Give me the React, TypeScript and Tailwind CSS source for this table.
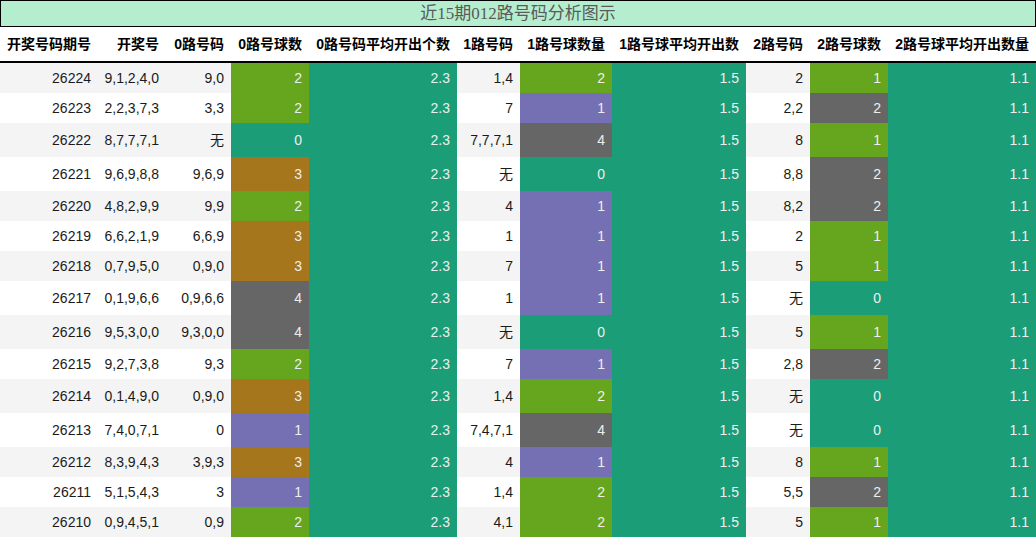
import React from 'react';

type Tone = 'green' | 'purple' | 'brown' | 'gray' | 'teal';

const toneClass: Record<Tone, string> = {
  green: 'bg-[#66a61e]',
  purple: 'bg-[#7570b3]',
  brown: 'bg-[#a6761d]',
  gray: 'bg-[#666666]',
  teal: 'bg-[#1b9e77]',
};

// [期号, 开奖号, 0路号码, 0路球数, 色, 1路号码, 1路球数, 色, 2路号码, 2路球数, 色]
type Row = [string, string, string, string, Tone, string, string, Tone, string, string, Tone];

const rows: Row[] = [
  ['26224', '9,1,2,4,0', '9,0', '2', 'green', '1,4', '2', 'green', '2', '1', 'green'],
  ['26223', '2,2,3,7,3', '3,3', '2', 'green', '7', '1', 'purple', '2,2', '2', 'gray'],
  ['26222', '8,7,7,7,1', '无', '0', 'teal', '7,7,7,1', '4', 'gray', '8', '1', 'green'],
  ['26221', '9,6,9,8,8', '9,6,9', '3', 'brown', '无', '0', 'teal', '8,8', '2', 'gray'],
  ['26220', '4,8,2,9,9', '9,9', '2', 'green', '4', '1', 'purple', '8,2', '2', 'gray'],
  ['26219', '6,6,2,1,9', '6,6,9', '3', 'brown', '1', '1', 'purple', '2', '1', 'green'],
  ['26218', '0,7,9,5,0', '0,9,0', '3', 'brown', '7', '1', 'purple', '5', '1', 'green'],
  ['26217', '0,1,9,6,6', '0,9,6,6', '4', 'gray', '1', '1', 'purple', '无', '0', 'teal'],
  ['26216', '9,5,3,0,0', '9,3,0,0', '4', 'gray', '无', '0', 'teal', '5', '1', 'green'],
  ['26215', '9,2,7,3,8', '9,3', '2', 'green', '7', '1', 'purple', '2,8', '2', 'gray'],
  ['26214', '0,1,4,9,0', '0,9,0', '3', 'brown', '1,4', '2', 'green', '无', '0', 'teal'],
  ['26213', '7,4,0,7,1', '0', '1', 'purple', '7,4,7,1', '4', 'gray', '无', '0', 'teal'],
  ['26212', '8,3,9,4,3', '3,9,3', '3', 'brown', '4', '1', 'purple', '8', '1', 'green'],
  ['26211', '5,1,5,4,3', '3', '1', 'purple', '1,4', '2', 'green', '5,5', '2', 'gray'],
  ['26210', '0,9,4,5,1', '0,9', '2', 'green', '4,1', '2', 'green', '5', '1', 'green'],
];

const headers = [
  '开奖号码期号',
  '开奖号',
  '0路号码',
  '0路号球数',
  '0路号码平均开出个数',
  '1路号码',
  '1路号球数量',
  '1路号球平均开出数',
  '2路号码',
  '2路号球数',
  '2路号球平均开出数量',
];

const widths = [
  'w-[98px]',
  'w-[68px]',
  'w-[65px]',
  'w-[78px]',
  'w-[148px]',
  'w-[63px]',
  'w-[92px]',
  'w-[134px]',
  'w-[64px]',
  'w-[78px]',
  'w-[148px]',
];

function Plain({ w, children }: { w: string; children: React.ReactNode }) {
  return <div className={`${w} shrink-0 flex items-center justify-end pr-[7px] text-[#1a1a1a]`}>{children}</div>;
}

function Filled({ w, tone, children }: { w: string; tone: Tone; children: React.ReactNode }) {
  return (
    <div className={`${w} shrink-0 flex items-center justify-end pr-[7px] text-[#eeeeee] ${toneClass[tone]}`}>
      {children}
    </div>
  );
}

export default function App() {
  return (
    <div className="w-[1036px] h-[538px] overflow-hidden bg-white text-[14px] font-['Liberation_Sans','Noto_Sans_CJK_SC',sans-serif]">
      {/* Title */}
      <div className="h-[27px] border border-black bg-[#b5eecf] flex items-center justify-center text-[17px] text-[#5a5a5a] font-['Liberation_Serif','Noto_Sans_CJK_SC',serif]">
        近15期012路号码分析图示
      </div>

      {/* Header */}
      <div className="flex h-[36px] border-b-2 border-black font-bold text-black">
        {headers.map((h, i) => (
          <div key={h} className={`${widths[i]} shrink-0 flex items-center justify-end pr-[7px] whitespace-nowrap`}>
            {h}
          </div>
        ))}
      </div>

      {/* Rows */}
      {rows.map((r, idx) => {
        const tall = r.includes('无');
        return (
          <div
            key={r[0]}
            className={`flex ${tall ? 'h-[34px]' : 'h-[30px]'} ${idx % 2 === 0 ? 'bg-[#f4f4f4]' : 'bg-white'}`}
          >
            <Plain w={widths[0]}>{r[0]}</Plain>
            <Plain w={widths[1]}>{r[1]}</Plain>
            <Plain w={widths[2]}>{r[2]}</Plain>
            <Filled w={widths[3]} tone={r[4]}>{r[3]}</Filled>
            <Filled w={widths[4]} tone="teal">2.3</Filled>
            <Plain w={widths[5]}>{r[5]}</Plain>
            <Filled w={widths[6]} tone={r[7]}>{r[6]}</Filled>
            <Filled w={widths[7]} tone="teal">1.5</Filled>
            <Plain w={widths[8]}>{r[8]}</Plain>
            <Filled w={widths[9]} tone={r[10]}>{r[9]}</Filled>
            <Filled w={widths[10]} tone="teal">1.1</Filled>
          </div>
        );
      })}
    </div>
  );
}
